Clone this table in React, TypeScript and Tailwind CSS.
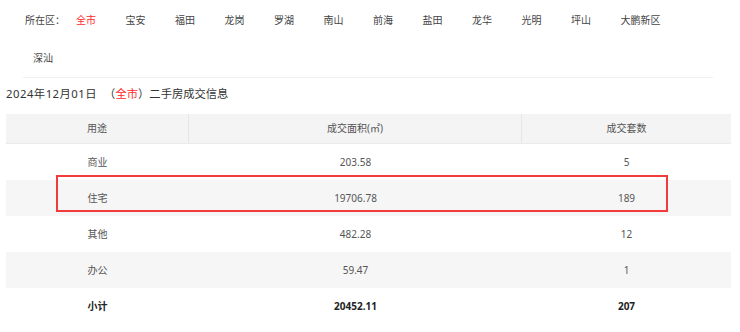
import React from "react";

const districts = ["全市", "宝安", "福田", "龙岗", "罗湖", "南山", "前海", "盐田", "龙华", "光明", "坪山", "大鹏新区", "深汕"];

const rows = [
  { use: "商业", area: "203.58", count: "5" },
  { use: "住宅", area: "19706.78", count: "189" },
  { use: "其他", area: "482.28", count: "12" },
  { use: "办公", area: "59.47", count: "1" },
];

export default function App() {
  return (
    <div className="w-[740px] h-[332px] bg-white overflow-hidden text-[#444] [font-family:'Noto_Sans','Noto_Sans_CJK_SC',sans-serif]">
      {/* District filter */}
      <div className="ml-[23px] w-[690px] pt-[1px] border-b border-[#f0f0f0]">
        <div className="flex flex-wrap pl-[2px] text-[10px] leading-[38px]">
          <span className="w-[40px] mr-[3px] text-[#444]">所在区：</span>
          {districts.map((d, i) => (
            <span
              key={d}
              className={
                i === 0
                  ? "ml-[8px] mr-[21.5px] text-[#ff2a2a]"
                  : "ml-[8px] mr-[21.5px] text-[#444]"
              }
            >
              {d}
            </span>
          ))}
        </div>
      </div>

      {/* Title */}
      <div className="pl-[6px] h-[32px] leading-[32px] text-[11.3px] text-[#333]">
        <span className="tracking-[0.5px]">2024年12月01日</span>
        <span className="ml-[7px]">（</span>
        <span className="text-[#ff2a2a]">全市</span>
        <span>）</span>
        二手房成交信息
      </div>

      {/* Table */}
      <div className="relative ml-[6px] mt-[4px] w-[725px] text-[10px] text-[#555]">
        <div className="grid grid-cols-[183px_333px_209px] h-[30px] bg-[#f4f4f4] border-b border-[#ebebeb]">
          <div className="flex items-center justify-center border-r border-[#e6e6e6]">用途</div>
          <div className="flex items-center justify-center border-r border-[#e6e6e6]">成交面积(㎡)</div>
          <div className="flex items-center justify-center">成交套数</div>
        </div>
        {rows.map((r, i) => (
          <div
            key={r.use}
            className={
              i % 2 === 1
                ? "grid grid-cols-[183px_333px_209px] h-[36px] bg-[#f6f6f6]"
                : "grid grid-cols-[183px_333px_209px] h-[36px] bg-white"
            }
          >
            <div className="flex items-center justify-center">{r.use}</div>
            <div className="flex items-center justify-center">{r.area}</div>
            <div className="flex items-center justify-center">{r.count}</div>
          </div>
        ))}
        <div className="grid grid-cols-[183px_333px_209px] h-[36px] font-bold text-[#222]">
          <div className="flex items-center justify-center">小计</div>
          <div className="flex items-center justify-center">20452.11</div>
          <div className="flex items-center justify-center">207</div>
        </div>

        {/* highlight annotation */}
        <div className="absolute left-[50px] top-[61px] w-[612px] h-[37px] border-2 border-[#f23c3c]" />
      </div>
    </div>
  );
}
